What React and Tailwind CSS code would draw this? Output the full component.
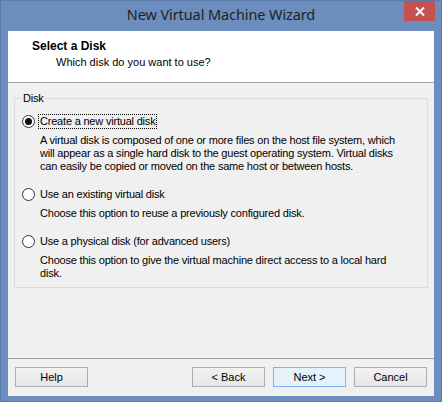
import { useState } from "react";

const options = [
  {
    id: "new",
    label: "Create a new virtual disk",
    desc: "A virtual disk is composed of one or more files on the host file system, which will appear as a single hard disk to the guest operating system. Virtual disks can easily be copied or moved on the same host or between hosts.",
  },
  {
    id: "existing",
    label: "Use an existing virtual disk",
    desc: "Choose this option to reuse a previously configured disk.",
  },
  {
    id: "physical",
    label: "Use a physical disk (for advanced users)",
    desc: "Choose this option to give the virtual machine direct access to a local hard disk.",
  },
];

function Radio({ checked }) {
  return (
    <span className="w-[13px] h-[13px] rounded-full border border-[#333] bg-white flex items-center justify-center shrink-0">
      {checked && <span className="w-[7px] h-[7px] rounded-full bg-[#111]" />}
    </span>
  );
}

function Button({ children, primary }) {
  return (
    <button
      className={`w-[73px] h-[20px] border text-[11px] leading-none ${
        primary
          ? "border-[#7eb4ea] bg-[#e5f1fb]"
          : "border-[#adadad] bg-gradient-to-b from-[#f2f2f2] to-[#e6e6e6]"
      }`}
    >
      {children}
    </button>
  );
}

export default function App() {
  const [choice, setChoice] = useState("new");

  return (
    <div
      className="w-[442px] h-[402px] border border-[#5b7cad] bg-[#6b8ebf] flex flex-col text-black"
      style={{ fontFamily: '"Liberation Sans", Arial, sans-serif' }}
    >
      {/* title bar */}
      <div className="h-[30px] relative flex items-center justify-center shrink-0">
        <span
          className="text-[14.5px] text-[#222] pb-[3px] tracking-[-0.1px]"
          style={{ fontFamily: '"Noto Sans", "Open Sans", sans-serif' }}
        >
          New Virtual Machine Wizard
        </span>
        <div className="absolute right-[6px] top-0 w-[31px] h-[20px] bg-[#c75050] flex items-center justify-center">
          <svg width="10" height="9" viewBox="0 0 10 9">
            <path d="M1 0.5 L9 8.5 M9 0.5 L1 8.5" stroke="#fff" strokeWidth="2" />
          </svg>
        </div>
      </div>

      {/* client area */}
      <div className="flex-1 mx-[7px] mb-[5px] bg-[#f0f0f0] flex flex-col">
        <div className="h-[52px] bg-white border-b border-[#a0a0a0] shrink-0 pt-[8px] pl-[24px]">
          <div className="text-[12px] font-bold leading-[14px]">Select a Disk</div>
          <div className="text-[11px] leading-[14px] mt-[2px] pl-[24px]">
            Which disk do you want to use?
          </div>
        </div>

        <fieldset className="mx-[6px] mt-[9px] h-[196px] border border-[#dcdcdc] px-[7px] tracking-[-0.2px]">
          <legend className="text-[11px] leading-[13px] px-[1px]">Disk</legend>
          {options.map((o, i) => (
            <div key={o.id} className={i === 0 ? "mt-[9px]" : "mt-[14px]"}>
              <label
                className="flex items-center gap-[3px] cursor-default"
                onClick={() => setChoice(o.id)}
              >
                <Radio checked={choice === o.id} />
                <span
                  className={`text-[11px] leading-[13px] px-[1px] border border-dotted ${
                    choice === o.id ? "border-black" : "border-transparent"
                  }`}
                >
                  {o.label}
                </span>
              </label>
              <p className="text-[11px] leading-[13px] pl-[18px] pr-[12px] mt-[5px]">{o.desc}</p>
            </div>
          ))}
        </fieldset>

        <div className="flex-1" />
        <div className="border-t border-[#a0a0a0]" />
        <div className="flex items-center px-[7px] pt-[8px] pb-[9px]">
          <Button>Help</Button>
          <div className="flex-1" />
          <div className="flex gap-[8px]">
            <Button>&lt; Back</Button>
            <Button primary>Next &gt;</Button>
            <Button>Cancel</Button>
          </div>
        </div>
      </div>
    </div>
  );
}
